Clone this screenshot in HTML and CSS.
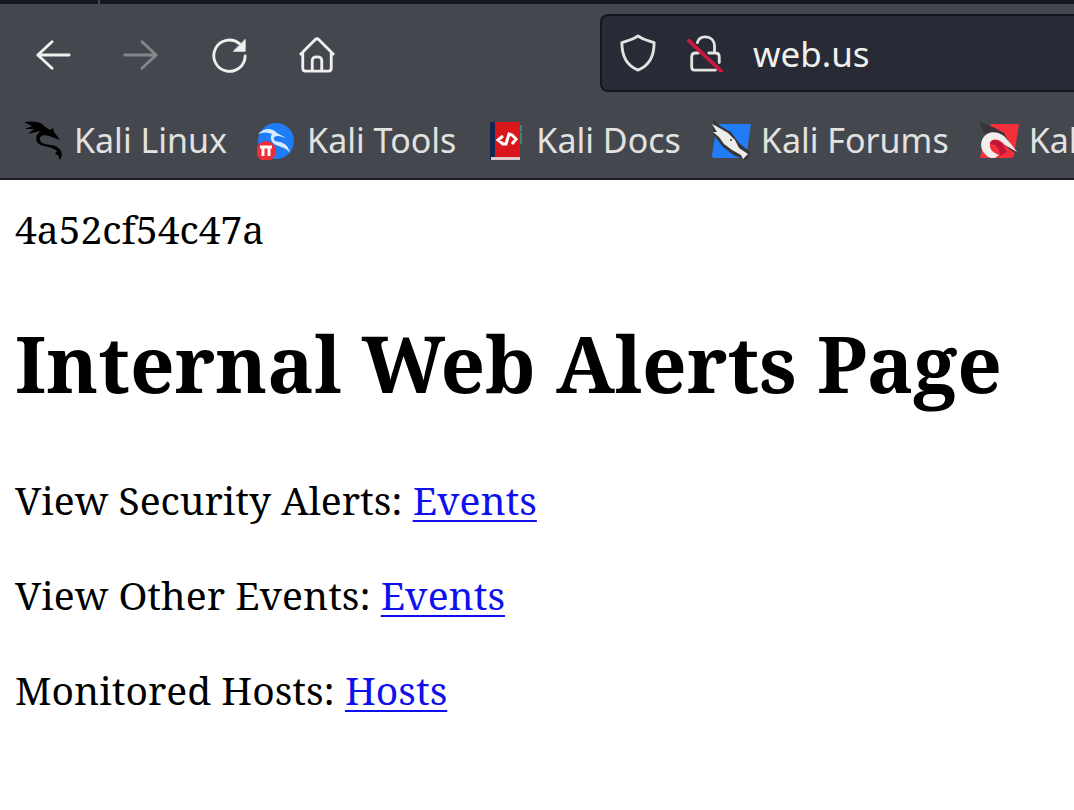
FILE: index.html
```html
<!DOCTYPE html>
<html lang="en">
<head>
<meta charset="utf-8">
<title>web.us</title>
<link rel="stylesheet" href="styles.css">
</head>
<body>
<header class="chrome">
  <div class="tab-strip"><span class="tab-divider"></span></div>
  <div class="toolbar">
    <nav class="nav-buttons" aria-label="Browser navigation">
      <button class="nav-button" aria-label="Back"><svg class="icon" viewBox="0 0 40 40"><path d="M37 20H4M19 6L4 20L19 34"/></svg></button>
      <button class="nav-button" aria-label="Forward" disabled><svg class="icon" viewBox="0 0 40 40"><path d="M3 20H36M21 6L36 20L21 34"/></svg></button>
      <button class="nav-button" aria-label="Reload"><svg class="icon" viewBox="0 0 40 40"><path d="M37 21A16.500 16.500 0 1 1 31 8"/><path class="solid" d="M37 4V16H25Z"/></svg></button>
      <button class="nav-button" aria-label="Home"><svg class="icon" viewBox="0 0 40 40"><path d="M3 19L18 4Q20 2 22 4L37 19M5 17V34Q5 37 8 37H32Q35 37 35 34V17M15 37V26Q15 22 20 22T25 26V37"/></svg></button>
    </nav>
    <div class="address">
      <svg class="icon" viewBox="0 0 40 40"><path d="M20 2C15 6 9 7 3 9C3 22 7 33 20 38C33 33 37 22 37 9C31 7 25 6 20 2Z"/></svg>
      <svg class="icon" viewBox="0 0 40 40"><path d="M12 9C13 5 16 3 20 3C26 3 30 7 30 13V20M13 20H10Q6 20 6 24V35Q6 38 9 38H31M24 20H31Q35 20 35 24V30"/><path class="strike" d="M3 7L37 39"/></svg>
      <input class="address-input" type="text" value="web.us" aria-label="Address">
    </div>
  </div>
  <nav class="bookmarks" aria-label="Bookmarks">
    <a class="bookmark" href="#"><svg class="favicon" viewBox="0 0 40 40"><path d="M0 2C8 1 16 1 20 6L26 10L29 8L30 12L36 20L25 16C18 14 15 17 16 20C17 25 25 24 31 26C37 28 40 34 36 40L34 35L31 34L33 31C28 26 19 27 15 24C10 20 12 14 17 11L12 12L4 14L10 9L1 9L8 6Z"/></svg>Kali Linux</a>
    <a class="bookmark" href="#"><svg class="favicon" viewBox="0 0 40 40"><circle cx="19" cy="21" r="18" fill="#1d7cf6"/><path d="M1 14C8 7 15 8 20 13L29 18L22 16Q14 16 18 21C24 22 31 23 33 33C28 26 20 27 16 23Q12 18 15 14Q8 11 1 14Z" fill="#d5e9ff"/><circle cx="9" cy="31" r="10" fill="#ee2e36"/><path d="M3 27H15M6 27V36M12 27V36" fill="none" stroke="#fff" stroke-width="3"/></svg>Kali Tools</a>
    <a class="bookmark" href="#"><svg class="favicon" viewBox="0 0 40 40"><path fill="#162653" d="M4 2H10V40H4Z"/><path fill="#3e8577" d="M33 5H36V11L34 13H36V23L33 25Z"/><path fill="#d9161c" d="M9 2H34V38H9Z"/><path fill="#e0c9cc" d="M5 37H34V40H5Z"/><path d="M17 16L12 20L17 24L20 24L23 14L26 15L30 19L26 24" fill="none" stroke="#fff" stroke-width="3"/></svg>Kali Docs</a>
    <a class="bookmark" href="#"><svg class="favicon" viewBox="0 0 40 40"><path d="M6 4H40L35 38H3Q1 38 1 35Z" fill="#237cf7"/><path d="M2 0L11 7L20 12L28 23L39 32L36 40L24 36L12 27L2 14Z" fill="#353638"/><path d="M1 4L5 6L17 13L24 20L28 28L37 34L32 39L30 35L21 30L13 24L8 17L2 12L6 12Z" fill="#ededeb"/><circle cx="20" cy="20" r="1" fill="#333"/></svg>Kali Forums</a>
    <a class="bookmark" href="#"><svg class="favicon" viewBox="0 0 40 40"><path d="M12 4H40L35 36Q34 38 31 38H1L5 20Z" fill="#f3303a"/><path d="M0 1L5 4L14 7L25 13L37 34L28 27L18 16L5 13Z" fill="#35353b"/><path d="M5 13L0 32L4 28Z" fill="#45474e"/><path d="M12 38C2 34 1 25 3 20C7 11 17 10 25 16L32 24L38 32L26 25C19 17 11 19 11 24C10 30 15 33 20 35L16 38Z" fill="#f2eeed"/><path d="M11 24C12 18 20 19 24 25L28 32L21 36L20 29L16 25Z" fill="#bf1637"/></svg>Kali NetHunter</a>
  </nav>
</header>
<main class="page">
  <p class="line">4a52cf54c47a</p>
  <h1 class="title">Internal Web Alerts Page</h1>
  <p class="line">View Security Alerts: <a href="#">Events</a></p>
  <p class="line">View Other Events: <a href="#">Events</a></p>
  <p class="line">Monitored Hosts: <a href="#">Hosts</a></p>
</main>
</body>
</html>
```

FILE: styles.css
```css
* { box-sizing: border-box; }

body {
  margin: 0;
  background: #fff;
  color: #000;
}

.chrome {
  overflow: hidden;
  background: #45474e;
  border-bottom: 2px solid #1d1e22;
  color: #e2e2e0;
  font-family: "Noto Sans", sans-serif;
}

.tab-strip {
  height: 4px;
  background: #17181e;
}

.tab-divider {
  display: block;
  width: 2px;
  height: 4px;
  margin-left: 98px;
  background: #45474e;
}

.toolbar {
  display: flex;
  align-items: center;
  justify-content: space-between;
  gap: 264px;
  padding: 10px 0 10px 34px;
}

.nav-buttons {
  display: flex;
  gap: 50px;
  padding-top: 3px;
}

.nav-button {
  display: flex;
  padding: 0;
  border: 0;
  background: none;
  color: #f0f0ee;
}

.nav-button:disabled { color: #85868a; }

.icon {
  flex: none;
  width: 38px;
  height: 38px;
  fill: none;
  stroke: currentColor;
  stroke-width: 3;
  stroke-linecap: round;
  stroke-linejoin: round;
}

.icon .solid { fill: currentColor; stroke-width: 1; }
.icon .strike { stroke: #c91940; stroke-width: 4; }

.address {
  display: flex;
  flex: 1;
  align-items: center;
  gap: 29px;
  min-width: 0;
  height: 78px;
  padding-left: 17px;
  border: 2px solid #15161b;
  border-right: 0;
  border-radius: 8px 0 0 8px;
  background: #282a35;
  color: #e2e2e0;
}

.address-input {
  flex: 1;
  min-width: 0;
  padding: 2px 0 0;
  border: 0;
  outline: 0;
  background: none;
  color: #f0f0ee;
  font: 35px/44px "Noto Sans", sans-serif;
}

.bookmarks {
  display: flex;
  gap: 30px;
  padding: 13px 0 13px 24px;
}

.bookmark {
  display: flex;
  flex: none;
  align-items: center;
  gap: 10px;
  color: inherit;
  font-size: 34px;
  line-height: 50px;
  text-decoration: none;
  white-space: nowrap;
}

.favicon {
  width: 40px;
  height: 40px;
}

.page {
  padding: 22px 15px;
  font-family: "Noto Serif", "Liberation Serif", serif;
}

.line {
  margin: 0 0 41px;
  font-size: 39px;
  line-height: 54px;
}

.title {
  margin: 53px 0 56px;
  font-size: 78px;
  line-height: 108px;
}

.line a {
  color: #1010ee;
  text-decoration-thickness: 2px;
  text-underline-offset: 5px;
}
```
